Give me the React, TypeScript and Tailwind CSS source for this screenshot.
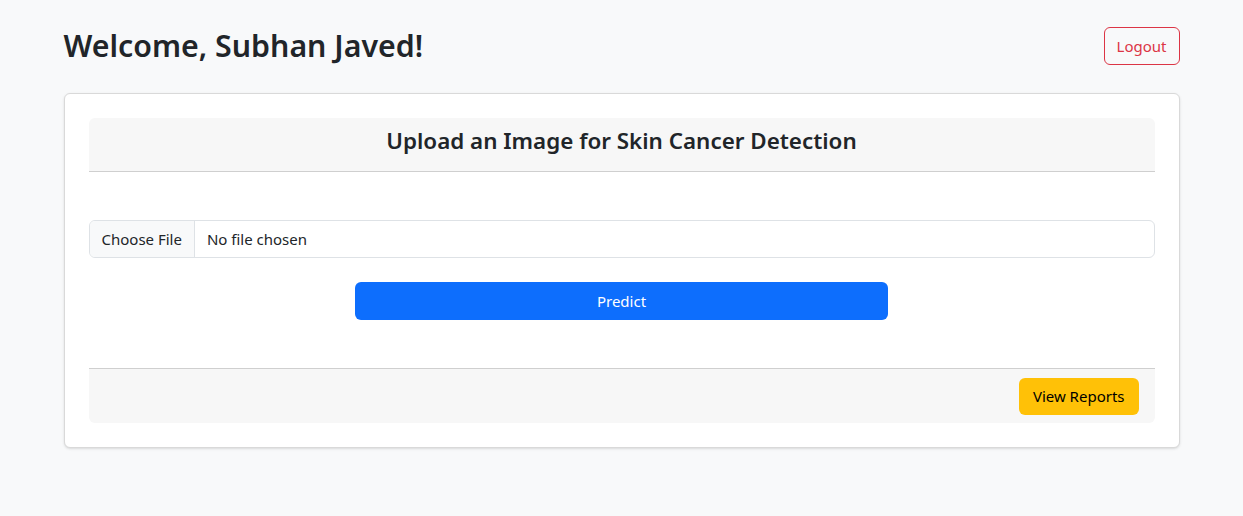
import React from 'react';

export default function App() {
  return (
    <div className="min-h-screen bg-[#f8f9fa] text-[#212529] font-['Noto_Sans',sans-serif]">
      <div className="mx-auto w-[1140px] px-3">
        {/* Header */}
        <div className="flex items-center justify-between pt-[27px]">
          <h2 className="text-[30.3px] leading-[38px] font-semibold">Welcome, Subhan Javed!</h2>
          <button className="h-[38px] px-3 rounded-md border border-[#dc3545] text-[#dc3545] text-[15px] leading-6">
            Logout
          </button>
        </div>

        {/* Card */}
        <div className="mt-[28px] bg-white border border-[#d9d9d9] rounded-md shadow-sm p-6">
          <div className="h-[54px] pb-2 bg-[#f7f7f7] border-b border-[#cfcfcf] rounded-t-md flex items-center justify-center">
            <h4 className="text-[22.4px] font-semibold leading-7">Upload an Image for Skin Cancer Detection</h4>
          </div>

          <div className="pt-12 pb-12">
            <div className="flex h-[38px] border border-[#dee2e6] rounded-md overflow-hidden text-[15px]">
              <span className="flex items-center px-3 bg-[#f8f9fa] border-r border-[#dee2e6]">Choose File</span>
              <span className="flex items-center px-3">No file chosen</span>
            </div>
            <div className="flex justify-center mt-6">
              <button className="w-[533px] h-[38px] rounded-md bg-[#0d6efd] text-white text-[15px]">Predict</button>
            </div>
          </div>

          <div className="h-[55px] bg-[#f7f7f7] border-t border-[#cfcfcf] rounded-b-md flex items-center justify-end px-4">
            <button className="h-[37px] px-[14px] rounded-md bg-[#ffc107] text-black text-[15px]">View Reports</button>
          </div>
        </div>
      </div>
    </div>
  );
}
